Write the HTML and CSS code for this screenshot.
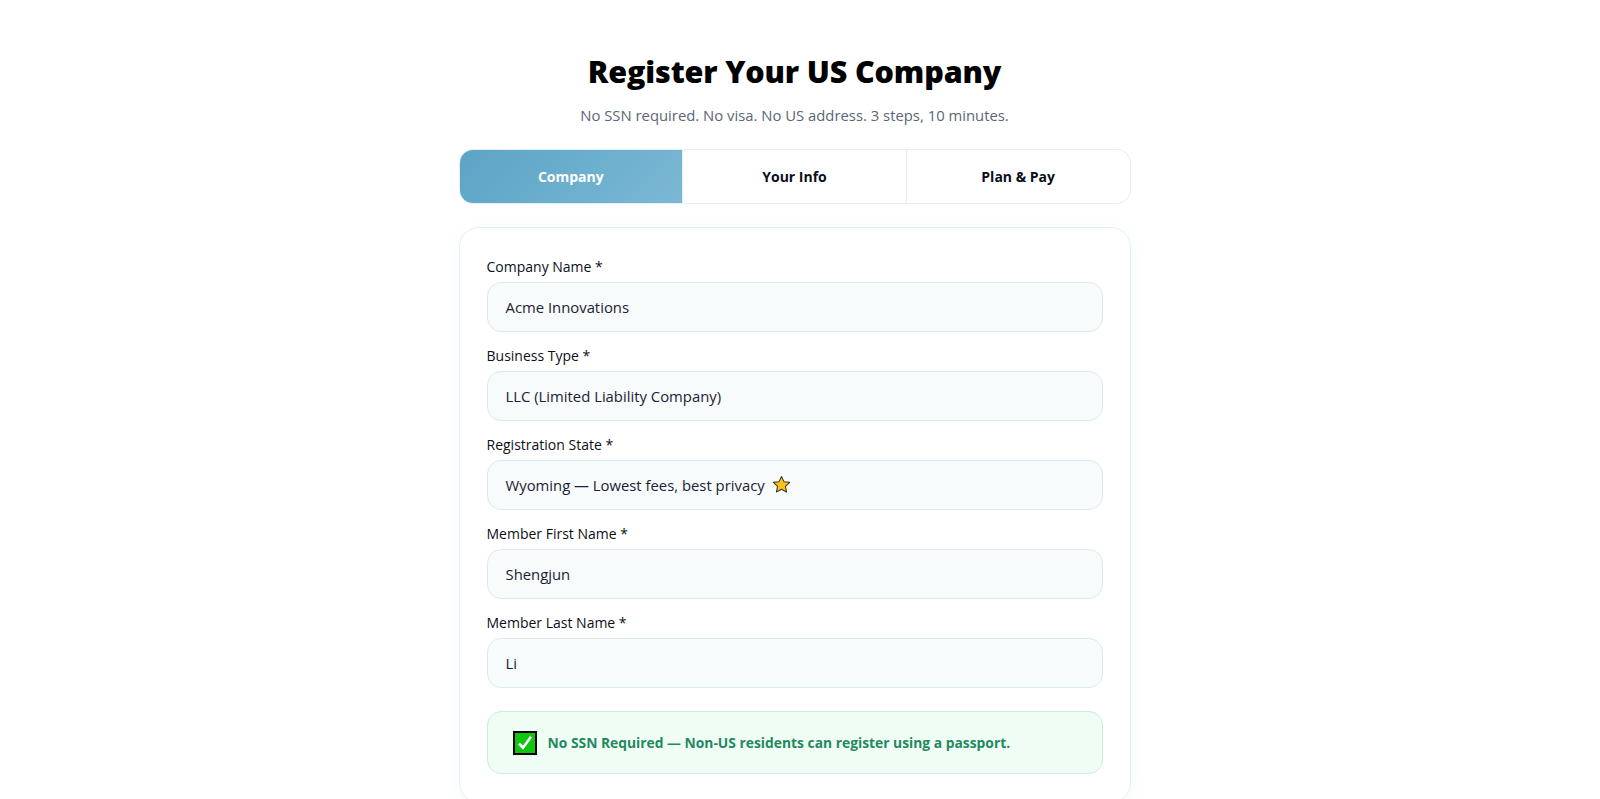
FILE: index.html
```html
<!DOCTYPE html>
<html lang="en">
<head>
    <meta charset="UTF-8">
    <meta name="viewport" content="width=device-width, initial-scale=1.0">
    <title>Register Your US Company</title>
    <link rel="stylesheet" href="styles.css">
</head>
<body>
<main class="container">
    <h1 class="title">Register Your US Company</h1>
    <p class="subtitle">No SSN required. No visa. No US address. 3 steps, 10 minutes.</p>

    <div class="steps">
        <div class="step active">Company</div>
        <div class="step">Your Info</div>
        <div class="step">Plan &amp; Pay</div>
    </div>

    <form class="card">
        <div class="field">
            <label class="field-label">Company Name *</label>
            <div class="field-input">Acme Innovations</div>
        </div>
        <div class="field">
            <label class="field-label">Business Type *</label>
            <div class="field-input">LLC (Limited Liability Company)</div>
        </div>
        <div class="field">
            <label class="field-label">Registration State *</label>
            <div class="field-input">
                Wyoming — Lowest fees, best privacy
                <svg class="star" viewBox="0 0 24 24" width="19" height="19">
                    <path d="M12 1.8l3.1 6.6 7.2.9-5.3 5 1.4 7.1L12 18l-6.4 3.4 1.4-7.1-5.3-5 7.2-.9z" fill="#fcc21b" stroke="#3a3320" stroke-width="1.3" stroke-linejoin="round"/>
                </svg>
            </div>
        </div>
        <div class="field">
            <label class="field-label">Member First Name *</label>
            <div class="field-input">Shengjun</div>
        </div>
        <div class="field">
            <label class="field-label">Member Last Name *</label>
            <div class="field-input">Li</div>
        </div>

        <div class="notice">
            <svg class="check" viewBox="0 0 24 24" width="24" height="24">
                <rect x="1" y="1" width="22" height="22" fill="#0ec60e" stroke="#000" stroke-width="2"/>
                <path d="M6 12.5l4 4.2 8-11" fill="none" stroke="#fff" stroke-width="2.6"/>
            </svg>
            <span class="notice-text">No SSN Required — Non-US residents can register using a passport.</span>
        </div>
    </form>
</main>
</body>
</html>
```

FILE: styles.css
```css
html, body {
    height: 100%;
}

body {
    margin: 0;
    padding-right: 11px;
    box-sizing: border-box;
    background-color: #fff;
    font-family: "Open Sans", "Noto Sans", sans-serif;
    color: #0f172a;
    overflow: hidden;
}

.container {
    width: 672px;
    margin: 0 auto;
    padding-top: 49px;
}

.title {
    margin: 0;
    font-size: 30.5px;
    line-height: 44px;
    font-weight: 800;
    letter-spacing: -0.15px;
    text-align: center;
    color: #000;
}

.subtitle {
    margin: 10px 0 0;
    font-size: 14.85px;
    line-height: 24px;
    text-align: center;
    color: #5b6675;
}

.steps {
    display: flex;
    height: 55px;
    margin-top: 22px;
    border: 1px solid #e3f0f3;
    border-radius: 14px;
    box-sizing: border-box;
    overflow: hidden;
}

.step {
    flex: 1;
    display: flex;
    align-items: center;
    justify-content: center;
    font-size: 14px;
    font-weight: 700;
    color: #0b0f19;
    border-left: 1px solid #e3f0f3;
}

.step:first-child {
    border-left: none;
}

.step.active {
    color: #fff;
    background: linear-gradient(135deg, #5ba4c6, #7cb8d4);
}

.card {
    margin-top: 22.5px;
    padding: 29px 27px 28px;
    border: 1px solid #e3f0f3;
    border-radius: 20px;
    box-shadow: 0 4px 20px rgba(91, 164, 198, 0.06);
}

.field {
    margin-bottom: 14.2px;
}

.field-label {
    display: block;
    margin-bottom: 5px;
    font-size: 14px;
    line-height: 20px;
    font-weight: 500;
    color: #0b0f19;
}

.field-input {
    display: flex;
    align-items: center;
    gap: 7px;
    box-sizing: border-box;
    height: 50px;
    padding: 0 18px;
    border: 1px solid #d9ebef;
    border-radius: 14px;
    background-color: #f8fbfc;
    font-size: 14.85px;
    color: #1a2233;
}

.notice {
    display: flex;
    align-items: center;
    gap: 11px;
    box-sizing: border-box;
    height: 63px;
    margin-top: 23px;
    padding: 0 25px;
    border: 1px solid #cfeadf;
    border-radius: 14px;
    background-color: #f0fdf4;
}

.notice-text {
    font-size: 13.83px;
    font-weight: 700;
    color: #1f8a5f;
}
```
